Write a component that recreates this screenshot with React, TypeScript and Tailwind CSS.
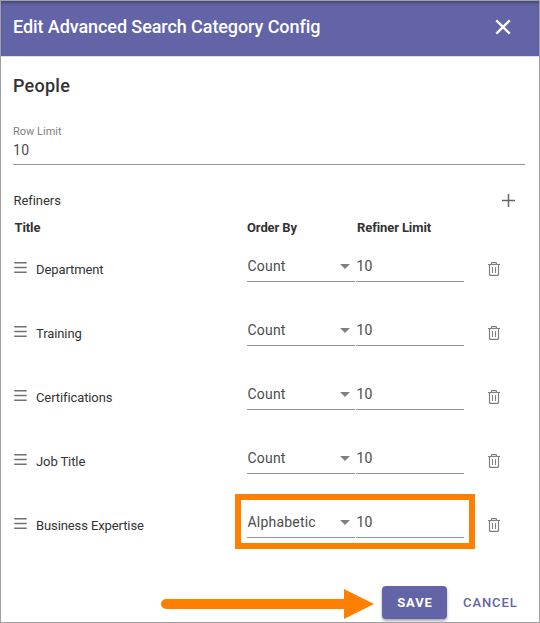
const refiners = [
  { title: "Department", order: "Count", limit: 10 },
  { title: "Training", order: "Count", limit: 10 },
  { title: "Certifications", order: "Count", limit: 10 },
  { title: "Job Title", order: "Count", limit: 10 },
  { title: "Business Expertise", order: "Alphabetic", limit: 10, highlighted: true },
];

function CloseIcon() {
  return (
    <svg width="16" height="16" viewBox="0 0 16 16" fill="none" stroke="white" strokeWidth="2.4">
      <path d="M1.3 1.3 14.7 14.7M14.7 1.3 1.3 14.7" />
    </svg>
  );
}

function PlusIcon() {
  return (
    <svg width="13" height="13" viewBox="0 0 13 13" fill="none" stroke="#666" strokeWidth="1.5">
      <path d="M6.5 0V13M0 6.5H13" />
    </svg>
  );
}

function DragIcon() {
  return (
    <svg width="13" height="11" viewBox="0 0 13 11" fill="#707070">
      <path d="M.3 0H12.7V1.6H.3zM.3 4.7H12.7V6.3H.3zM.3 9.4H12.7V11H.3z" />
    </svg>
  );
}

function TrashIcon() {
  return (
    <svg width="12" height="14" viewBox="0 0 12 14" fill="none" stroke="#808080" strokeWidth="1.2">
      <path d="M0 2.5H12M3.5 2.4V1.3Q3.5 .6 4.2 .6H7.8Q8.5 .6 8.5 1.3V2.4M1.5 2.5V12.5Q1.5 13.4 2.4 13.4H9.6Q10.5 13.4 10.5 12.5V2.5" />
      <path d="M4.5 5V11M7.5 5V11" strokeWidth="1" />
    </svg>
  );
}

export default function App() {
  return (
    <div className="flex h-[623px] w-[540px] flex-col overflow-hidden border border-[#a0a0a0] bg-white font-[Roboto,sans-serif] text-[#333]">
      <header className="flex h-[56px] shrink-0 items-center justify-between border-b border-[#dedede] bg-[#6264a7] pr-7 pl-3 text-white shadow-[inset_0_3px_3px_-1px_rgba(0,0,0,0.3)]">
        <h1 className="pb-[5px] text-[18px] font-medium tracking-[-0.08px] whitespace-nowrap">Edit Advanced Search Category Config</h1>
        <button className="pb-[4px]"><CloseIcon /></button>
      </header>

      <main className="flex flex-col px-3">
        <h2 className="mt-4 h-[26px] text-[18px] leading-[26px] font-medium tracking-[0.25px]">People</h2>
        <label className="mt-[25px] mr-[2px] flex flex-col border-b border-[#949494] pb-[3px]">
          <span className="h-4 text-[11px] leading-4 text-[#808080]">Row Limit</span>
          <span className="h-[21px] text-[14px] leading-[20px] tracking-[0.3px] text-[#4c4c4c]">10</span>
        </label>

        <div className="mt-[26px] flex h-5 items-center justify-between pr-3 text-[13px] tracking-[-0.06px]">
          <span className="pl-[0.5px]">Refiners</span>
          <button className="pb-[2px]"><PlusIcon /></button>
        </div>
        <div className="mt-[7px] flex h-5 items-center text-[13px] font-bold tracking-[-0.1px]">
          <span className="w-[234px] pl-[1.5px]">Title</span>
          <span className="w-[110px]">Order By</span>
          <span>Refiner Limit</span>
        </div>

        {refiners.map((r) => (
          <div key={r.title} className="relative -top-px flex h-16 items-center text-[13px]">
            <span className="flex w-[22px] pb-[3px] pl-px"><DragIcon /></span>
            <span className="w-[212px] pt-[2px] pl-px tracking-[-0.1px]">{r.title}</span>
            <div className="flex h-[26px] w-[108px] items-start justify-between border-b border-[#949494] pr-[5px] pl-[0.5px] text-[14px] leading-[20px] tracking-[0.2px] text-[#4c4c4c]">
              {r.order}
              <span className="mt-[8px] border-x-[5px] border-t-[5px] border-x-transparent border-t-[#808080]" />
            </div>
            <div className="ml-px h-[26px] w-[108px] border-b border-[#949494] pl-[0.5px] text-[14px] leading-[20px] tracking-[0.2px] text-[#4c4c4c]">{r.limit}</div>
            <button className="ml-6 pb-px"><TrashIcon /></button>
            {r.highlighted && (
              <span className="absolute top-px left-[222px] h-[55px] w-[240px] border-[6px] border-[#ff8000]" />
            )}
          </div>
        ))}
      </main>

      <footer className="mt-[28px] flex h-[34px] shrink-0 items-start pl-[160px] text-[13px] font-bold tracking-[0.9px]">
        <svg className="mt-[3px]" width="213" height="30" viewBox="0 0 213 30" fill="#ff8000">
          <path d="M5 10H183V0L213 15 183 30V20H5A5 5 0 0 1 5 10Z" />
        </svg>
        <button className="ml-2 h-[33px] w-[65px] rounded-[4px] bg-[#6264a7] pl-px text-white shadow-[0_2px_3px_rgba(0,0,0,0.35)]">SAVE</button>
        <button className="ml-4 h-[33px] font-medium text-[#6264a7]">CANCEL</button>
      </footer>
    </div>
  );
}
